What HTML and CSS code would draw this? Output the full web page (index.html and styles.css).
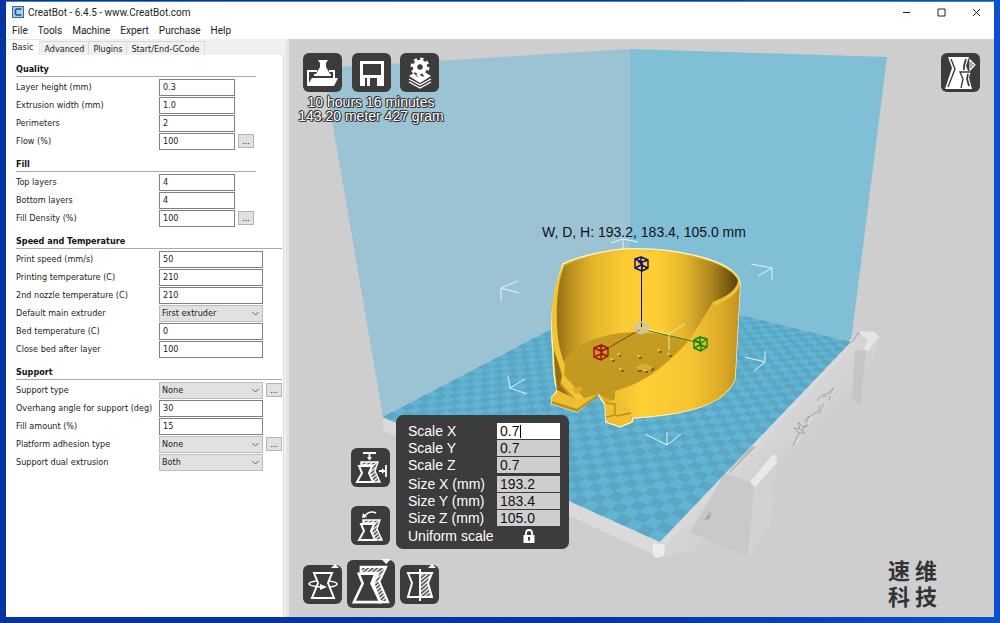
FILE: index.html
```html
<!DOCTYPE html>
<html lang="en">
<head>
<meta charset="utf-8">
<title>CreatBot - 6.4.5 - www.CreatBot.com</title>
<link rel="stylesheet" href="styles.css">
</head>
<body>
<div class="window">
  <header class="titlebar">
    <svg class="app-icon" viewBox="0 0 12 12" aria-hidden="true"><rect width="12" height="12" fill="#2f6f9f"/><rect x="1" y="1" width="10" height="10" fill="#a9cfe6"/><path d="M8.500 4V3H4.500L3.500 4V8L4.500 9H8.500V8" fill="none" stroke="#1d5480" stroke-width="1.600"/></svg>
    <h1 class="title">CreatBot - 6.4.5 - www.CreatBot.com</h1>
    <div class="window-buttons">
      <button aria-label="Minimize"><svg viewBox="0 0 9 9"><path d="M1 4.500H8"/></svg></button>
      <button aria-label="Maximize"><svg viewBox="0 0 9 9"><path d="M1 1H8V8H1Z"/></svg></button>
      <button aria-label="Close"><svg viewBox="0 0 9 9"><path d="M1 1L8 8M8 1L1 8"/></svg></button>
    </div>
  </header>
  <nav class="menubar">
    <button>File</button><button>Tools</button><button>Machine</button><button>Expert</button><button>Purchase</button><button>Help</button>
  </nav>
  <main class="main">
    <aside class="sidebar">
      <div class="tabs" role="tablist">
        <button class="tab active" role="tab" aria-selected="true">Basic</button><button class="tab" role="tab">Advanced</button><button class="tab" role="tab">Plugins</button><button class="tab" role="tab">Start/End-GCode</button>
      </div>
      <form class="settings">
        <section class="group narrow">
          <h2>Quality</h2>
          <div class="row"><label for="lh">Layer height (mm)</label><input id="lh" value="0.3"></div>
          <div class="row"><label for="ew">Extrusion width (mm)</label><input id="ew" value="1.0"></div>
          <div class="row"><label for="pe">Perimeters</label><input id="pe" value="2"></div>
          <div class="row"><label for="fl">Flow (%)</label><input id="fl" value="100"><button type="button" class="more" aria-label="More flow settings">...</button></div>
        </section>
        <section class="group narrow">
          <h2>Fill</h2>
          <div class="row"><label for="tl">Top layers</label><input id="tl" value="4"></div>
          <div class="row"><label for="bl">Bottom layers</label><input id="bl" value="4"></div>
          <div class="row"><label for="fd">Fill Density (%)</label><input id="fd" value="100"><button type="button" class="more" aria-label="More fill settings">...</button></div>
        </section>
        <section class="group">
          <h2>Speed and Temperature</h2>
          <div class="row"><label for="ps">Print speed (mm/s)</label><input id="ps" value="50"></div>
          <div class="row"><label for="pt">Printing temperature (C)</label><input id="pt" value="210"></div>
          <div class="row"><label for="nt">2nd nozzle temperature (C)</label><input id="nt" value="210"></div>
          <div class="row"><label for="me">Default main extruder</label><select id="me"><option>First extruder</option></select></div>
          <div class="row"><label for="bt">Bed temperature (C)</label><input id="bt" value="0"></div>
          <div class="row"><label for="cb">Close bed after layer</label><input id="cb" value="100"></div>
        </section>
        <section class="group">
          <h2>Support</h2>
          <div class="row"><label for="st">Support type</label><select id="st"><option>None</option></select><button type="button" class="more" aria-label="More support settings">...</button></div>
          <div class="row"><label for="oa">Overhang angle for support (deg)</label><input id="oa" value="30"></div>
          <div class="row"><label for="fa">Fill amount (%)</label><input id="fa" value="15"></div>
          <div class="row"><label for="pa">Platform adhesion type</label><select id="pa"><option>None</option></select><button type="button" class="more" aria-label="More adhesion settings">...</button></div>
          <div class="row"><label for="sd">Support dual extrusion</label><select id="sd"><option>Both</option></select></div>
        </section>
      </form>
    </aside>

    <section class="viewport" aria-label="3D view">
      <svg class="scene" viewBox="289 39 705 578" preserveAspectRatio="xMidYMid slice">
        <defs>
          <linearGradient id="inner" gradientUnits="userSpaceOnUse" x1="555" y1="0" x2="740" y2="0">
            <stop offset="0" stop-color="#8d6c14"/><stop offset=".08" stop-color="#b88f20"/><stop offset=".2" stop-color="#e3b32b"/><stop offset=".38" stop-color="#fccb34"/><stop offset=".56" stop-color="#ffce35"/><stop offset=".7" stop-color="#e5b52d"/><stop offset=".85" stop-color="#ab841c"/><stop offset="1" stop-color="#4f3d0c"/>
          </linearGradient>
          <linearGradient id="outer" gradientUnits="userSpaceOnUse" x1="616" y1="0" x2="740" y2="0">
            <stop offset="0" stop-color="#f0be2e"/><stop offset=".2" stop-color="#ffd036"/><stop offset=".6" stop-color="#f6c431"/><stop offset=".85" stop-color="#dcab28"/><stop offset="1" stop-color="#c1921f"/>
          </linearGradient>
          <linearGradient id="disc" x1="0" y1="0" x2="0" y2="1"><stop offset="0" stop-color="#c59c22"/><stop offset="1" stop-color="#c09820"/></linearGradient>
          <linearGradient id="side" gradientUnits="userSpaceOnUse" x1="755" y1="442" x2="785" y2="470"><stop offset="0" stop-color="#d7d7d7"/><stop offset="1" stop-color="#cecece"/></linearGradient>
        </defs>
        <path d="M323 68L630 49V288L383 417Z" fill="#9cc3d3"/>
        <path d="M630 49L887 57L851 342L630 288Z" fill="#80bfd6"/>
        <path d="M383 417L660 542L657 556L383 430Z" fill="#dadada"/>
        <path d="M660 542L858 331L880 336L862 400L700 550L664 556Z" fill="url(#side)"/>
        <path d="M383 417L630 288L851 342L660 542Z" fill="#62b4d3"/>
        <path id="checker" fill="#5ba6c4"/>
        <path d="M660 542L851 342L857 331L861 332L858 340L665 547Z" fill="#d9d9d9"/>
        <path d="M851 342L858 331L861 332L852 343ZM728 473L752 446L756 447L731 472Z" fill="#b9b9b9"/>
        <path d="M653 543L665 545L664 556L656 558L653 555Z" fill="#ececec"/>
        <path d="M855 351L866 350L860 407L852 399Z" fill="#c5c5c5"/>
        <path d="M858 331L875 332L879 337L868 351L864 349L868 340Z" fill="#e6e6e6"/>
        <path d="M725 473L750 482L754 487L748 557L690 532Z" fill="#c9c9c9"/>
        <path d="M754 487L776 464L771 525L748 557Z" fill="#d2d2d2"/>
        <path d="M750 482L773 454L777 457L776 464L755 487Z" fill="#e9e9e9"/>
        <path d="M704 520L711 511L710 519Z" fill="#a9a9a9"/>
        <path d="M793 446L799 433L794 428L800 429L798 422L803 427L808 425L801 430L805 433L799 433M804 421L809 416L806 423M809 417L817 412M819 414L824 404M820 405L818 412M817 401Q820 394 828 394L833 388L829 400M823 397L827 396" fill="none" stroke="#a3a3a3" stroke-width="1"/>
        <path d="M796 444L801 437M808 424L812 417M822 410L826 403M830 396L834 390" fill="none" stroke="#e6e6e6" stroke-width="1"/>

        <g fill="none" stroke="#e5f4f8" stroke-width="1">
          <path d="M611 243L623 239L638 242M623 239V250M518 281L501 288V301M501 288L519 293M751 264L772 268V280M772 268L758 276M508 376L510 388L525 379M510 388L527 394M745 357L765 362V351M765 362L754 371M645 434L667 445L681 434M667 445V432"/>
        </g>
        <path d="M563 264Q583 254 623 249Q662 247 697 256Q737 266 740 283L735 378Q734 385 723 395Q701 414 633 418L632 422L620 427L606 422L605 405L598 394L577 412L552 404V397L557 391Q553 375 553 352Q548 305 563 264Z" fill="#dcae2a" stroke="#fff3b4" stroke-width="1.500"/>
        <path d="M564 266Q585 255 625 250Q665 249 698 258Q733 267 738 281Q736 291 723 298L713 302L684 355L610 395L557 389Q550 330 558 285Z" fill="url(#inner)"/>
        <path d="M565 359Q584 335 632 332Q665 332 690 342L665 380L616 403L598 394L577 408L556 389Z" fill="url(#disc)"/>
        <path d="M713 302L724 298Q736 291 738 282L740 285L735 378Q734 385 723 395Q701 414 633 417L623 412L615 404V391Q641 384 660 368Q684 348 692 336Z" fill="url(#outer)"/>
        <path d="M713 302Q734 294 738 283Q739 272 722 264Q738 270 740 284Q738 296 714 306Z" fill="#f0c139"/>
        <path d="M563 264L559 285Q555 310 558 338Q560 353 565 365L564 375L585 399L579 403L560 382L562 374L554 350Q549 310 556 284Z" fill="#f3c335"/>
        <path d="M557 366L562 376L560 385L576 404L557 390Z" fill="#957219"/>
        <path d="M552 397L559 391L578 400L598 394L577 409L552 402Z" fill="#eebd30"/>
        <path d="M552 401L577 409L598 394V396L577 412L552 404Z" fill="#b8901e"/>
        <path d="M605 403L615 399L620 403L631 412V421L620 426L606 420Z" fill="#efbe31"/>
        <path d="M615 404V415L606 417M615 404L605 403M616 416L631 413" fill="none" stroke="#b88f1e" stroke-width="1.500"/>
        <path d="M572 389L580 386L583 390L576 394Z" fill="#dead2a"/>
        <path d="M636 367Q644 361 653 367L650 371L646 368L639 371Z" fill="#ddae2c"/>
        <path d="M651 371L654 368M638 371H642M612 361H615M619 356H621M639 358H642M621 371H624M659 352H662M669 356H672M645 372H648" fill="none" stroke="#7b5f15" stroke-width="2"/>
        <path d="M610 359H613M617 354H620M637 356H640M619 369H622M657 350H660M667 354H670M643 370H647" fill="none" stroke="#edbd33" stroke-width="2"/>
        <path d="M641 329L601 352" stroke="#8b3a08"/><path d="M641 329L700 343" stroke="#337d0c"/><path d="M641.500 264V329" stroke="#11115a"/>
        <path d="M669 350V334L685 324M669 334L641 328" fill="none" stroke="#efe8aa"/>
        <g fill="none" stroke-width="1.400" stroke-linejoin="round">
          <path d="M635 259L641 257L648 260V268L642 271L635 268ZM635 259L642 262L648 260M642 262V271M635 268L641 265L648 268M641 257V265M638 261L645 267" stroke="#11116a"/>
          <path d="M594 348L601 345L608 348V356L601 360L594 357ZM594 348L601 351L608 348M601 351V360M594 357L601 354L608 356M601 345V354M598 349L605 356" stroke="#a0100f"/>
          <path d="M694 340L700 337L707 339V347L701 351L694 348ZM694 340L701 343L707 339M701 343V351M694 348L700 345L707 347M700 337V345M697 341L704 347" stroke="#0c850b"/>
          <path d="M635 325L641 322L648 325V331L641 334L635 331ZM635 325L641 328L648 325M641 328V334M635 331L641 328L648 331" stroke="#c7c5b4"/>
        </g>
        <text class="dimensions" x="542" y="237">W, D, H: 193.2, 183.4, 105.0 mm</text>
      </svg>

      <div class="top-tools">
        <div class="tool-row">
          <button class="tool" aria-label="Load model"><svg viewBox="0 0 39 39"><path d="M5 32V18H14M26 18H31V25" fill="none" stroke="#fff" stroke-width="2"/><path d="M15 7H25L23 10V14L27 21H13L17 14V10ZM9 25H35L31 33H4Z" fill="#fff"/><path d="M11 22H28" stroke="#fff" stroke-width="2"/></svg></button>
          <button class="tool" aria-label="Save"><svg viewBox="0 0 39 39"><path fill-rule="evenodd" fill="#fff" d="M8 8H32V33H8ZM11 11V22H29V11ZM13 25V33H15V25ZM18 25V33H25V25Z"/></svg></button>
          <button class="tool" aria-label="Slice"><svg viewBox="0 0 39 39"><circle cx="20" cy="14" r="5" fill="none" stroke="#fff" stroke-width="4.500"/><circle cx="20" cy="14" r="8" fill="none" stroke="#fff" stroke-width="3" stroke-dasharray="3.140 3.140"/><path d="M9 23L14 20L17 24L20 22L23 24L26 20L31 23L20 30Z" fill="#fff"/><path d="M9 26L20 32L31 26M9 29L20 35L31 29" fill="none" stroke="#fff" stroke-width="1.400"/></svg></button>
        </div>
        <p class="estimate">10 hours 16 minutes<br>143.20 meter 427 gram</p>
      </div>

      <button class="tool view-mode" aria-label="View mode"><svg viewBox="0 0 39 39"><path d="M7 4H28L25 13L27 18H30L28 25L31 36H4L11 15Z" fill="#fff"/><path d="M10 6L14 16L7 34M20 35L22 26L19 19H30" fill="none" stroke="#3c3c3c" stroke-width="1.400"/><path d="M25 6L23 13V17M27 21L26 26L28 33" fill="none" stroke="#3c3c3c" stroke-width="1.800"/><path d="M29 7L34 12L29 17ZM31 10V14" fill="none" stroke="#fff" stroke-width="1.200"/></svg></button>

      <div class="scale-tools">
        <button class="tool" aria-label="Scale to maximum"><svg viewBox="0 0 39 39"><use href="#vase-small"/><path d="M12 5H25M18.500 6V12M28 23H34M35 17V29" stroke="#fff" stroke-width="1.800" fill="none"/><path d="M16 9H21L18.500 12ZM31 20V26L34 23Z" fill="#fff"/></svg></button>
        <button class="tool" aria-label="Reset scale"><svg viewBox="0 0 39 39"><g transform="translate(2 0)"><use href="#vase-small"/></g><path d="M13 11Q18 4 25 7" stroke="#fff" stroke-width="1.500" fill="none"/><path d="M11 12L12 7L16 11Z" fill="#fff"/></svg></button>
      </div>

      <form class="scale-panel">
        <label for="sx">Scale X</label><div class="editing"><input id="sx" value="0.7"><i class="caret"></i></div>
        <label for="sy">Scale Y</label><input id="sy" value="0.7">
        <label for="sz">Scale Z</label><input id="sz" value="0.7">
        <hr>
        <label for="mx">Size X (mm)</label><input id="mx" value="193.2">
        <label for="my">Size Y (mm)</label><input id="my" value="183.4">
        <label for="mz">Size Z (mm)</label><input id="mz" value="105.0">
        <label class="uniform" for="uniform">Uniform scale</label>
        <button type="button" id="uniform" class="lock" aria-label="Uniform scale lock"><svg viewBox="0 0 12 14"><path d="M3 6V4Q3 1 6 1T9 4V6" fill="none" stroke="#fff" stroke-width="1.800"/><path d="M0.500 6H11.500V14H.5Z" fill="#fff"/><path d="M5 8H7V10L6.500 12H5.500L5 10Z" fill="#3c3c3c"/></svg></button>
      </form>

      <div class="bottom-tools">
        <button class="tool" aria-label="Rotate"><svg viewBox="0 0 39 39"><path d="M11 8H29L25 18L31 33H9L15 18Z" fill="none" stroke="#fff" stroke-width="2"/><path d="M13 16Q6 17 6 19T18 22M26 16Q34 17 34 19T27 22" fill="none" stroke="#fff" stroke-width="1.600"/><path d="M17 19L24 22L17 25Z" fill="#fff"/><path d="M28 3L32 -1L36 3Z" fill="#fff"/></svg></button>
        <button class="tool large" aria-label="Scale"><svg viewBox="0 0 49 49"><path d="M14 13V7H40L33 22L42 43H34L27 24L32 13Z" fill="url(#hatch)" stroke="#fff" stroke-width="2.200"/><path d="M12 14H29L25 24L34 43H7L16 24Z" fill="#3c3c3c" stroke="#fff" stroke-width="2.600"/><path d="M35 -1H45L40 4Z" fill="#fff"/></svg></button>
        <button class="tool" aria-label="Mirror"><svg viewBox="0 0 39 39"><path d="M20 8H32L28 18L32 32H20Z" fill="url(#hatch)"/><path d="M8 8H32L28 18L32 32H8L12 18Z" fill="none" stroke="#fff" stroke-width="2"/><path d="M20 4V36" stroke="#fff" stroke-width="2"/><path d="M28 3L32 -1L36 3Z" fill="#fff"/></svg></button>
      </div>

      <svg class="symbols" aria-hidden="true">
        <defs>
          <pattern id="hatch" width="3" height="3" patternUnits="userSpaceOnUse" patternTransform="rotate(50)"><rect width="3" height="3" fill="#3c3c3c"/><rect width="1.500" height="3" fill="#fff"/></pattern>
          <g id="vase-small"><path d="M10 17V14H27L24 23L29 34H21L18 24L22 17Z" fill="url(#hatch)" stroke="#fff" stroke-width="1.400"/><path d="M8 18H21L18 25L22 34H6L11 25Z" fill="#3c3c3c" stroke="#fff" stroke-width="2"/></g>
        </defs>
      </svg>

      <p class="brand" lang="zh-CN">速 维<br>科 技</p>
    </section>
  </main>
</div>
<script src="bed.js"></script>
</body>
</html>
```
FILE: styles.css
```css
* { box-sizing: border-box; }

body {
  margin: 0;
  min-height: 100vh;
  display: flex;
  padding: 1px 6px 6px;
  background: linear-gradient(90deg, #0433a4, #0236a8 60%, #0a50cc 100%);
  font-family: Roboto, "Noto Sans", sans-serif;
  font-size: 10px;
  color: #222;
}

button, input, select { font: inherit; color: inherit; }
button { border: 0; padding: 0; background: none; }

.window {
  flex: 1;
  display: flex;
  flex-direction: column;
  background: #fff;
  border-top: 1px solid #4c84a8;
}

.titlebar {
  display: flex;
  align-items: center;
  height: 20px;
  padding-left: 6px;
}
.app-icon { width: 12px; height: 12px; margin-right: 4px; }
.title { flex: 1; margin: 0; font-size: 10px; font-weight: 400; }
.window-buttons { display: flex; }
.window-buttons button { width: 35px; display: grid; place-items: center; }
.window-buttons svg { width: 9px; height: 9px; fill: none; stroke: #222; }

.menubar {
  display: flex;
  gap: 10px;
  height: 17px;
  padding-left: 6px;
}

.main { flex: 1; display: flex; }

.sidebar {
  flex: 0 0 283px;
  display: flex;
  flex-direction: column;
  background: #f0f0f0;
  border-right: 3px solid #e4e4e4;
  font-family: "DejaVu Sans Condensed", "DejaVu Sans", sans-serif;
  font-size: 9px;
}
.tabs { display: flex; align-items: flex-end; height: 16px; padding-left: 1px; }
.tab {
  height: 14px;
  padding: 0 4px;
  background: #f0f0f0;
  border: 1px solid #d9d9d9;
  border-width: 1px 1px 0 0;
}
.tab.active { height: 16px; padding: 0 6px 2px 5px; background: #fff; border-color: #e4e4e4; }

.settings {
  flex: 1;
  padding: 8px 0 0 10px;
  margin-right: 2px;
  background: #fff;
  border-right: 1px solid #dcdcdc;
}
.group { width: 266px; padding-bottom: 8px; }
.group.narrow { width: 240px; }
.group h2 {
  height: 14px;
  margin: 0 0 1px;
  border-bottom: 1px solid #aaa;
  font-size: 9px;
  line-height: 13px;
  color: #111;
}
.row {
  display: grid;
  grid-template-columns: 143px 104px 16px;
  align-items: center;
  height: 18px;
}
.narrow .row { grid-template-columns: 143px 76px 16px; }
.row label { white-space: nowrap; }
.row input, .row select {
  width: 100%;
  height: 17px;
  padding: 0 0 1px 3px;
  border: 1px solid #808080;
  border-radius: 0;
  background: #fff;
}
.row select {
  appearance: none;
  padding-left: 2px;
  border-color: #bcbcbc;
  background: #e1e1e1 url("data:image/svg+xml,%3Csvg xmlns='http://www.w3.org/2000/svg' width='7' height='5'%3E%3Cpath d='M.5 1L3.500 4L6.500 1' fill='none' stroke='%23666'/%3E%3C/svg%3E") no-repeat right 3px center;
}
.more {
  width: 16px;
  height: 14px;
  margin-left: 3px;
  border: 1px solid #b4b4b4;
  background: #e1e1e1;
  line-height: 8px;
}

.viewport {
  position: relative;
  flex: 1;
  overflow: hidden;
  background: #cecece;
  font-family: "Liberation Sans", Arial, sans-serif;
  font-size: 14px;
}
.scene { position: absolute; inset: 0; width: 100%; height: 100%; }
.symbols { position: absolute; width: 0; height: 0; }
.dimensions { font-size: 14px; fill: #101018; }

.tool {
  display: block;
  width: 39px;
  height: 39px;
  border-radius: 6px;
  background: #3c3c3c;
}
.tool svg { display: block; width: 100%; height: 100%; overflow: visible; }
.tool.large { width: 48px; height: 48px; }

.top-tools { position: absolute; left: 14px; top: 14px; width: 136px; }
.tool-row { display: flex; justify-content: space-between; }
.estimate {
  margin: 3px -10px 0;
  line-height: 14px;
  text-align: center;
  white-space: nowrap;
  color: #fff;
  text-shadow: 1px 0 #333, -1px 0 #333, 0 1px #333, 0 -1px #333, 1px 1px #333, -1px -1px #333;
}
.view-mode { position: absolute; right: 14px; top: 14px; }
.scale-tools { position: absolute; left: 62px; bottom: 72px; display: grid; gap: 19px; }
.bottom-tools { position: absolute; left: 14px; bottom: 9px; display: flex; align-items: center; gap: 5px; }

.scale-panel {
  position: absolute;
  left: 107px;
  bottom: 68px;
  display: grid;
  grid-template-columns: 89px 63px;
  row-gap: 1px;
  padding: 8px 9px 4px 12px;
  border-radius: 7px;
  background: #3c3c3c;
  color: #fff;
  line-height: 16px;
}
.scale-panel input {
  width: 100%;
  height: 16px;
  padding: 0 3px;
  border: 0;
  background: #cecece;
  color: #111;
}
.scale-panel hr { grid-column: 1 / -1; width: 100%; height: 1px; margin: 0; border: 0; }
.editing { position: relative; height: 16px; }
.scale-panel .editing input { display: block; background: #fff; }
.caret { position: absolute; left: 23px; top: 2px; width: 1px; height: 13px; background: #000; }
.uniform { line-height: 18px; white-space: nowrap; }
.lock { display: grid; place-items: center; }
.lock svg { width: 12px; height: 14px; }

.brand {
  position: absolute;
  right: 57px;
  bottom: 9px;
  margin: 0;
  font-family: "Noto Sans CJK SC", sans-serif;
  font-size: 22px;
  font-weight: 700;
  line-height: 26px;
  color: #333;
}
```
FILE: bed.js
```javascript
// Fills the build plate with a 30 x 40 checkerboard in perspective.
(function () {
  const [a, b, c, d] = [[383, 417], [660, 542], [851, 342], [630, 288]];
  const cols = 30, rows = 40;
  const sx = a[0] - b[0] + c[0] - d[0], sy = a[1] - b[1] + c[1] - d[1];
  const dx1 = b[0] - c[0], dx2 = d[0] - c[0], dy1 = b[1] - c[1], dy2 = d[1] - c[1];
  const det = dx1 * dy2 - dx2 * dy1;
  const g = (sx * dy2 - dx2 * sy) / det, h = (dx1 * sy - sx * dy1) / det;
  const project = (u, v) => {
    const w = g * u + h * v + 1;
    const x = (b[0] - a[0] + g * b[0]) * u + (d[0] - a[0] + h * d[0]) * v + a[0];
    const y = (b[1] - a[1] + g * b[1]) * u + (d[1] - a[1] + h * d[1]) * v + a[1];
    return (x / w).toFixed(2) + " " + (y / w).toFixed(2);
  };
  let path = "";
  for (let i = 0; i < cols; i++) {
    for (let j = i % 2; j < rows; j += 2) {
      const u = i / cols, v = j / rows, u2 = (i + 1) / cols, v2 = (j + 1) / rows;
      path += "M" + [project(u, v), project(u2, v), project(u2, v2), project(u, v2)].join("L") + "Z";
    }
  }
  document.getElementById("checker").setAttribute("d", path);
})();
```
